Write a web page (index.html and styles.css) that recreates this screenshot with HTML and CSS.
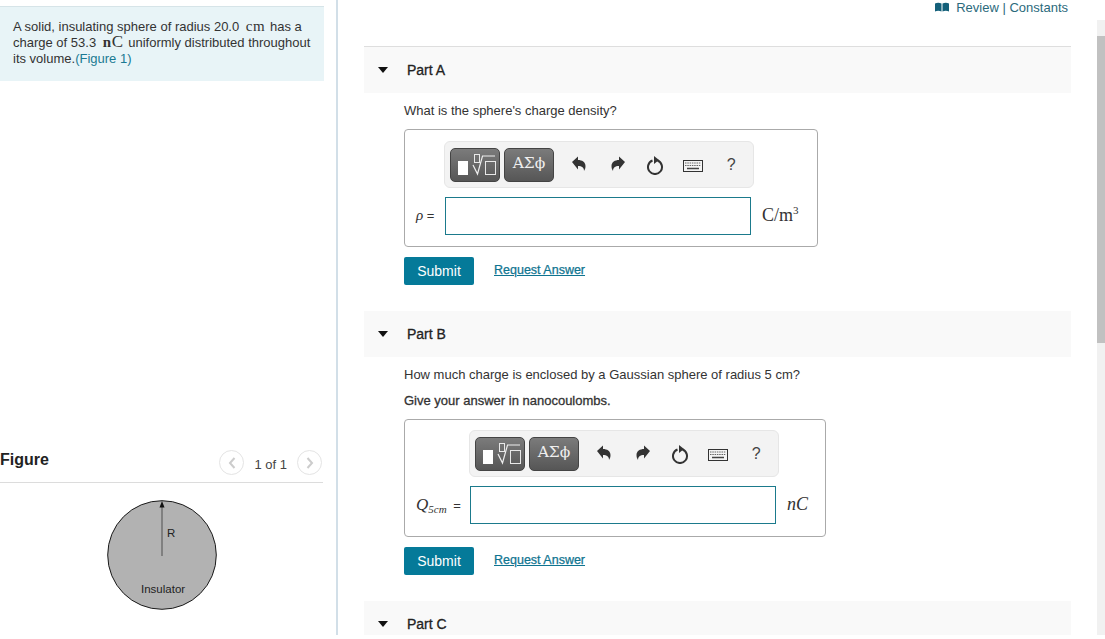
FILE: index.html
```html
<!DOCTYPE html>
<html lang="en">
<head>
<meta charset="utf-8">
<title>Sphere charge density</title>
<link rel="stylesheet" href="styles.css">
</head>
<body>
<div class="page">
  <aside class="side">
    <div class="intro">A solid, insulating sphere of radius 20.0 <span class="math gap">cm</span> has a charge of 53.3 <span class="math gap big">n<span class="cap">C</span></span> uniformly distributed throughout its volume.<a class="fig-link">(Figure 1)</a></div>
    <div class="fig-head">
      <h2 class="fig-title">Figure</h2>
      <div class="pager">
        <span class="round"><svg width="10" height="14" viewBox="0 0 10 14"><path d="M7.500 2 3 7l4.500 5" fill="none" stroke="#ccc" stroke-width="2"/></svg></span>
        <span class="count">1 of 1</span>
        <span class="round"><svg width="10" height="14" viewBox="0 0 10 14"><path d="M2.500 2 7 7l-4.500 5" fill="none" stroke="#ccc" stroke-width="2"/></svg></span>
      </div>
    </div>
    <svg class="fig" width="112" height="112" viewBox="0 0 112 112">
      <circle cx="56" cy="56" r="54.300" fill="#b2b2b2" stroke="#1a1a1a" stroke-width="1"/>
      <path d="M56 57V6" stroke="#6f6f6f" stroke-width="1.500"/>
      <path d="M56 2l-2.500 6.500h5z" fill="#111"/>
      <text x="61" y="38" class="fig-text">R</text>
      <text x="35" y="94" class="fig-text">Insulator</text>
    </svg>
  </aside>
  <main class="main">
    <div class="content">
      <div class="topbar">
        <svg class="book" width="14" height="10" viewBox="0 0 14 10"><path d="M0 1.500C2 .5 4.500 .5 6.500 1.500V9.500C4.500 8.500 2 8.500 0 9.500zM7.500 1.500C9.500 .5 12 .5 14 1.500V9.500C12 8.500 9.500 8.500 7.500 9.500z" fill="#14607a"/></svg>
        <span class="top-links">Review | Constants</span>
      </div>

      <section class="part part-a">
        <header class="part-head"><i class="caret"></i><h3 class="part-title">Part A</h3></header>
        <div class="part-body">
          <p class="q">What is the sphere's charge density?</p>
          <div class="answer answer-a">
            <div class="toolbar">
              <span class="tbtn"><svg width="48" height="32" viewBox="0 0 48 32"><rect x="7" y="12" width="10" height="14" fill="#fff"/><rect x="23.500" y="5.500" width="5" height="8" fill="none" stroke="#e8e8e8"/><path d="M22 16l4.500 9 5-18H44" fill="none" stroke="#eee" stroke-width="1.200"/><rect x="34.500" y="12.500" width="10" height="13" fill="none" stroke="#e8e8e8"/></svg></span>
              <span class="tbtn greek">ΑΣϕ</span>
              <span class="tool"><svg width="16" height="16" viewBox="0 0 16 16"><path d="M1 6 7 .5V4c4 0 7.500 2 7.500 6 0 2-.5 3.500-1.500 5 0-3.500-2-5-6-5v3.500z" fill="#333"/></svg></span>
              <span class="tool"><svg width="16" height="16" viewBox="0 0 16 16"><path d="M15 6 9 .5V4c-4 0-7.500 2-7.500 6 0 2 .5 3.500 1.500 5 0-3.500 2-5 6-5v3.500z" fill="#333"/></svg></span>
              <span class="tool"><svg width="18" height="20" viewBox="0 0 18 20"><path d="M5.500 5.500a7 7 0 1 0 5 0" fill="none" stroke="#333" stroke-width="2"/><path d="M7 1v8l5-4z" fill="#333"/></svg></span>
              <span class="tool"><svg width="20" height="12" viewBox="0 0 20 12"><rect x=".5" y=".5" width="19" height="11" fill="#f4f4f4" stroke="#333"/><path d="M2 3h16M2 5.500h16" stroke="#666" stroke-dasharray="1.500 .8"/><path d="M4 8.500h12" stroke="#444" stroke-width="1.500"/></svg></span>
              <span class="tool help">?</span>
            </div>
            <div class="label label-rho"><i class="rho">ρ</i> =</div>
            <div class="field"></div>
            <div class="unit">C/m<sup class="sup">3</sup></div>
          </div>
          <div class="actions"><button class="submit">Submit</button><a class="req">Request Answer</a></div>
        </div>
      </section>

      <section class="part part-b">
        <header class="part-head"><i class="caret"></i><h3 class="part-title">Part B</h3></header>
        <div class="part-body">
          <p class="q">How much charge is enclosed by a Gaussian sphere of radius 5 cm?</p>
          <p class="q q-strong">Give your answer in nanocoulombs.</p>
          <div class="answer answer-b">
            <div class="toolbar">
              <span class="tbtn"><svg width="48" height="32" viewBox="0 0 48 32"><rect x="7" y="12" width="10" height="14" fill="#fff"/><rect x="23.500" y="5.500" width="5" height="8" fill="none" stroke="#e8e8e8"/><path d="M22 16l4.500 9 5-18H44" fill="none" stroke="#eee" stroke-width="1.200"/><rect x="34.500" y="12.500" width="10" height="13" fill="none" stroke="#e8e8e8"/></svg></span>
              <span class="tbtn greek">ΑΣϕ</span>
              <span class="tool"><svg width="16" height="16" viewBox="0 0 16 16"><path d="M1 6 7 .5V4c4 0 7.500 2 7.500 6 0 2-.5 3.500-1.500 5 0-3.500-2-5-6-5v3.500z" fill="#333"/></svg></span>
              <span class="tool"><svg width="16" height="16" viewBox="0 0 16 16"><path d="M15 6 9 .5V4c-4 0-7.500 2-7.500 6 0 2 .5 3.500 1.500 5 0-3.500 2-5 6-5v3.500z" fill="#333"/></svg></span>
              <span class="tool"><svg width="18" height="20" viewBox="0 0 18 20"><path d="M5.500 5.500a7 7 0 1 0 5 0" fill="none" stroke="#333" stroke-width="2"/><path d="M7 1v8l5-4z" fill="#333"/></svg></span>
              <span class="tool"><svg width="20" height="12" viewBox="0 0 20 12"><rect x=".5" y=".5" width="19" height="11" fill="#f4f4f4" stroke="#333"/><path d="M2 3h16M2 5.500h16" stroke="#666" stroke-dasharray="1.500 .8"/><path d="M4 8.500h12" stroke="#444" stroke-width="1.500"/></svg></span>
              <span class="tool help">?</span>
            </div>
            <div class="label"><i class="qvar">Q</i><i class="sub">5cm</i> <span class="eq">=</span></div>
            <div class="field"></div>
            <div class="unit unit-i">nC</div>
          </div>
          <div class="actions"><button class="submit">Submit</button><a class="req">Request Answer</a></div>
        </div>
      </section>

      <section class="part part-c">
        <header class="part-head"><i class="caret"></i><h3 class="part-title">Part C</h3></header>
      </section>
    </div>
    <div class="scrollbar">
      <div class="sb-arrow"></div>
      <div class="sb-thumb"></div>
    </div>
  </main>
</div>
</body>
</html>
```
FILE: styles.css
```css
* { box-sizing: border-box; }
html, body { margin: 0; padding: 0; background: #fff; }
body { font-family: "Liberation Sans", Arial, sans-serif; font-size: 13px; color: #333; }
.page { display: flex; height: 635px; width: 1105px; overflow: hidden; }

.side { width: 338px; flex: none; padding-top: 6px; padding-right: 12px; border-right: 2px solid #d2dfe8; }
.intro { background: #e8f4f7; border-top: 1px solid #d6e4e8; padding: 12px 8px 14px 13px; line-height: 16px; height: 75px; }
.math { font-family: "Liberation Serif", serif; line-height: 0; }
.gap { margin: 0 1px 0 3px; letter-spacing: .6px; font-size: 15px; }
.big { font-weight: bold; }
.cap { font-size: 17px; font-weight: normal; line-height: 0; }
.fig-link { color: #1b7a93; }
.fig-head { display: flex; justify-content: space-between; align-items: center; height: 35px; margin: 367px 1px 0 0; border-bottom: 1px solid #dcdcdc; }
.fig-title { margin: 0 0 10px; font-size: 16px; font-weight: bold; color: #222; line-height: 20px; }
.pager { display: flex; align-items: center; gap: 10px; margin: 0 1px 5px 0; color: #555; }
.round { width: 25px; height: 25px; border: 1px solid #e4e4e4; border-radius: 50%; display: flex; align-items: center; justify-content: center; }
.count { font-size: 13px; color: #444; margin-top: 4px; }
.fig { display: block; margin: 16px auto 0; }
.fig-text { font-family: "Liberation Sans", Arial, sans-serif; font-size: 11.500px; fill: #222; }

.main { flex: 1; display: flex; min-width: 0; }
.content { flex: 1; padding: 0 26px; min-width: 0; }
.topbar { display: flex; justify-content: flex-end; align-items: center; gap: 7px; height: 47px; padding: 0 3px 33px 0; color: #2b6a7c; border-bottom: 1px solid #dedede; }
.top-links { padding-top: 1px; }
.book { flex: none; }
.part-head { display: flex; align-items: center; background: #f9f9f9; padding-left: 14px; height: 46px; }
.caret { width: 0; height: 0; border-left: 5px solid transparent; border-right: 5px solid transparent; border-top: 6px solid #111; margin-right: 19px; }
.part-title { margin: 0; font-size: 14px; font-weight: normal; color: #222; -webkit-text-stroke: .3px #222; }
.part-body { padding-left: 40px; }
.q { margin: 0; line-height: 20px; padding-top: 8px; }
.q-strong { -webkit-text-stroke: .3px #333; padding-top: 6px; }
.answer { display: grid; grid-template-rows: 47px 38px; row-gap: 9px; height: 118px; margin-top: 8px; border: 1px solid #aaa; border-radius: 4px; padding: 11px 0 0 11px; align-items: center; }
.answer-a { width: 414px; grid-template-columns: 28px 310px auto; }
.answer-b { width: 422px; grid-template-columns: 53px 310px auto; padding-top: 10px; }
.toolbar { grid-column: 2; grid-row: 1; height: 47px; background: #f3f3f3; border: 1px solid #e6e6e6; border-radius: 6px; display: flex; align-items: center; padding-left: 5px; gap: 4px; }
.tbtn { width: 50px; height: 34px; border: 1px solid #444; border-radius: 5px; background: linear-gradient(#7b7b7b, #565656); color: #eee; display: flex; align-items: center; justify-content: center; flex: none; }
.greek { font-family: "DejaVu Serif", "Liberation Serif", serif; font-size: 15.500px; padding-bottom: 3px; }
.tool { width: 38.500px; margin-left: -4px; display: flex; justify-content: center; align-items: center; flex: none; }
.tool:nth-child(3) { margin-left: 2px; padding-bottom: 2px; }
.tool:nth-child(4) { padding-bottom: 2px; }
.tool:nth-child(6) { margin-left: -6px; padding-top: 3px; }
.help { font-size: 16px; color: #444; margin-left: -4px; }
.label { grid-column: 1; grid-row: 2; font-size: 13px; white-space: nowrap; color: #333; }
.label-rho { padding-bottom: 2px; }
.rho { font-family: "Liberation Serif", serif; font-size: 15px; }
.qvar { font-family: "Liberation Serif", serif; font-size: 17px; }
.sub { font-family: "Liberation Serif", serif; font-size: 11px; position: relative; top: 3px; }
.eq { margin-left: 3px; }
.field { grid-column: 2; grid-row: 2; width: 306px; height: 38px; margin-left: 1px; border: 1px solid #1b7a8c; background: #fff; }
.unit { grid-column: 3; grid-row: 2; margin-left: 8px; padding-bottom: 2px; font-family: "Liberation Serif", serif; font-size: 18px; color: #333; white-space: nowrap; }
.unit-i { font-style: italic; }
.sup { font-size: 11px; line-height: 0; }
.actions { display: flex; align-items: center; gap: 20px; margin-top: 10px; }
.submit { width: 70px; height: 28px; padding: 0; border: 0; border-radius: 2px; background: #057a99; color: #fff; font: 14px "Liberation Sans", Arial, sans-serif; }
.req { font-size: 12.500px; color: #0f7490; text-decoration: underline; -webkit-text-stroke: .25px #0f7490; margin-bottom: 2px; }
.part-b { margin-top: 26px; }
.part-c { margin-top: 26px; }

.scrollbar { width: 8px; flex: none; margin-top: 20px; background: #f1f1f1; }
.sb-arrow { height: 16px; }
.sb-thumb { height: 307px; background: #c1c1c1; }
```
